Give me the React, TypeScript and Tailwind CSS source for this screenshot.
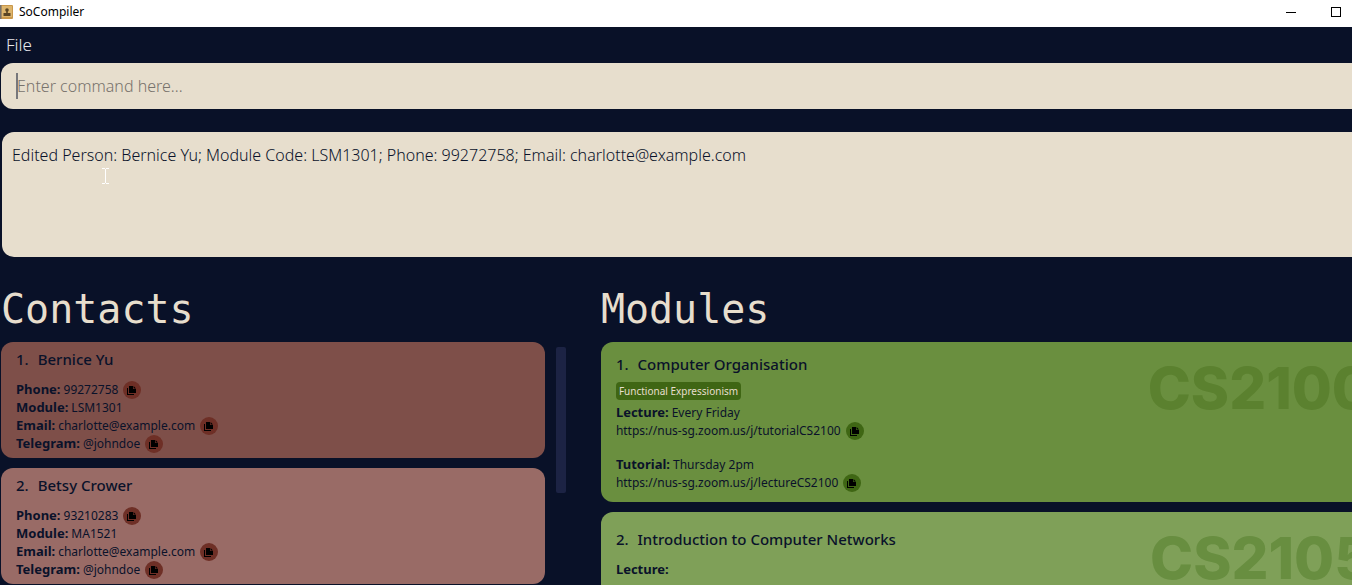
import React from "react";

type Contact = {
  name: string;
  phone: string;
  module: string;
  email: string;
  telegram: string;
  card: string;
};

type Lesson = { label: string; time?: string; url?: string };

type Module = {
  title: string;
  code: string;
  tag?: string;
  lessons: Lesson[];
  card: string;
  mark: string;
};

const contacts: Contact[] = [
  {
    name: "Bernice Yu",
    phone: "99272758",
    module: "LSM1301",
    email: "charlotte@example.com",
    telegram: "@johndoe",
    card: "bg-[#7e4f49]",
  },
  {
    name: "Betsy Crower",
    phone: "93210283",
    module: "MA1521",
    email: "charlotte@example.com",
    telegram: "@johndoe",
    card: "bg-[#996b66]",
  },
];

const modules: Module[] = [
  {
    title: "Computer Organisation",
    code: "CS2100",
    tag: "Functional Expressionism",
    lessons: [
      { label: "Lecture:", time: "Every Friday", url: "https://nus-sg.zoom.us/j/tutorialCS2100" },
      { label: "Tutorial:", time: "Thursday 2pm", url: "https://nus-sg.zoom.us/j/lectureCS2100" },
    ],
    card: "bg-[#6a8f3f] pt-2.5",
    mark: "text-[#5b812f]",
  },
  {
    title: "Introduction to Computer Networks",
    code: "CS2105",
    lessons: [{ label: "Lecture:" }],
    card: "bg-[#7fa058] pt-[15px]",
    mark: "text-[#688e40]",
  },
];

function CopyButton({ label, color }: { label: string; color: string }) {
  return (
    <button
      type="button"
      aria-label={label}
      className={`flex size-[18px] shrink-0 items-center justify-center rounded-full ${color}`}
    >
      <svg viewBox="0 0 10 10" className="size-2.5" aria-hidden="true">
        <path d="M2 1H6V4H9V8H2Z" fill="#000" />
        <path d="M6.6 1L9 3.4H6.6Z" fill="#000" />
        <path d="M0 3H1V9H7V10H0Z" fill="#000" />
      </svg>
    </button>
  );
}

function Field({ label, value, copy }: { label: string; value: string; copy?: boolean }) {
  return (
    <div className="flex h-[18px] items-center gap-[3px]">
      <dt className="text-[13px] font-bold">{label}</dt>
      <dd className="flex items-center gap-[5px]">
        {value}
        {copy && <CopyButton label={`Copy ${value}`} color="bg-[#6e2f26]" />}
      </dd>
    </div>
  );
}

function ContactCard({ contact, index }: { contact: Contact; index: number }) {
  return (
    <li className={`rounded-xl px-[15px] pt-[5px] pb-[5px] ${contact.card}`}>
      <h2 className="flex h-6 items-center gap-[9px] text-[15px] font-medium">
        <span>{index}.</span>
        {contact.name}
      </h2>
      <dl className="mt-2.5 text-[12px]">
        <Field label="Phone:" value={contact.phone} copy />
        <Field label="Module:" value={contact.module} />
        <Field label="Email:" value={contact.email} copy />
        <Field label="Telegram:" value={contact.telegram} copy />
      </dl>
    </li>
  );
}

function ModuleCard({ module, index }: { module: Module; index: number }) {
  return (
    <li className={`relative min-h-[160px] overflow-hidden rounded-l-xl px-[15px] ${module.card}`}>
      <h2 className="flex h-6 items-center gap-[9px] text-[15px] font-medium">
        <span>{index}.</span>
        {module.title}
      </h2>
      {module.tag && (
        <span className="mt-1.5 mb-[-6px] flex h-[18px] w-fit items-center rounded-sm bg-[#3f6614] px-[3px] text-[10px] text-[#e7decd]">
          {module.tag}
        </span>
      )}
      <div className="mt-2.5 flex flex-col gap-4 text-[12px]">
        {module.lessons.map((lesson) => (
          <div key={lesson.label}>
            <p className="flex h-[18px] items-center gap-[3px]">
              <b className="text-[13px]">{lesson.label}</b>
              {lesson.time}
            </p>
            {lesson.url && (
              <p className="flex h-[18px] items-center gap-[5px]">
                <a href={lesson.url}>{lesson.url}</a>
                <CopyButton label={`Copy ${lesson.label} link`} color="bg-[#3f6614]" />
              </p>
            )}
          </div>
        ))}
      </div>
      <span
        className={`absolute top-[14px] -right-5 font-['Inter'] text-[58px] leading-[64px] font-extrabold ${module.mark}`}
      >
        {module.code}
      </span>
    </li>
  );
}

export default function App() {
  return (
    <div className="flex h-screen flex-col overflow-hidden bg-[#091128] font-['Noto_Sans',sans-serif] text-[#0a122a]">
      <header className="flex h-[27px] shrink-0 items-center bg-white pb-[3px] text-xs text-black">
        <svg viewBox="0 0 13 14" className="h-[14px] w-[13px]" aria-hidden="true">
          <rect width="13" height="14" rx="1" fill="#c9974a" />
          <rect x="1.5" y="1" width="10.5" height="11" fill="#ddb56c" />
          <rect width="1.5" height="14" fill="#77716c" />
          <circle cx="7" cy="5" r="1.8" fill="#5a4524" />
          <path d="M6.2 6H7.8V8H10.5V11H3.5V8H6.2Z" fill="#5a4524" />
        </svg>
        <span className="ml-1.5 grow">SoCompiler</span>
        <button type="button" aria-label="Minimize" className="mr-[35px]">
          <svg viewBox="0 0 10 10" className="size-2.5" aria-hidden="true">
            <path d="M0 5.5H10" stroke="#000" />
          </svg>
        </button>
        <button type="button" aria-label="Maximize" className="mr-[11px]">
          <svg viewBox="0 0 10 10" className="size-2.5" aria-hidden="true">
            <rect x="0.5" y="0.5" width="9" height="9" fill="none" stroke="#000" />
          </svg>
        </button>
      </header>

      <nav className="flex h-9 shrink-0 items-center px-1.5">
        <button type="button" className="text-[17px] font-light text-[#e8e8ec]">
          File
        </button>
      </nav>

      <div className="relative ml-px shrink-0">
        <input
          type="text"
          aria-label="Command"
          placeholder="Enter command here..."
          className="block h-[46px] w-full rounded-l-xl bg-[#e7decd] pl-4 text-base font-light caret-transparent outline-none placeholder:text-[#77726c]"
        />
        <span className="absolute top-2.5 left-[15px] h-[26px] w-0.5 bg-[#77777b]" />
      </div>

      <div className="relative mt-[23px] ml-0.5 h-[125px] shrink-0 rounded-l-xl bg-[#e7decd] px-2.5 pt-[11px] text-base leading-6 font-light">
        <p>Edited Person: Bernice Yu; Module Code: LSM1301; Phone: 99272758; Email: charlotte@example.com</p>
        <svg viewBox="0 0 7 16" className="absolute top-9 left-[100px] h-4 w-[7px]" aria-hidden="true">
          <path d="M0 0.5H3M4 0.5H7M3.5 1V15M0 15.5H3M4 15.5H7" stroke="#fff" fill="none" />
        </svg>
      </div>

      <main className="mt-[27px] grid grow grid-cols-[4fr_5fr]">
        <section className="pl-px">
          <h1 className="h-[58px] font-['DejaVu_Sans_Mono',monospace] text-[40px] leading-[50px] text-[#e7decd]">
            Contacts
          </h1>
          <div className="flex gap-[11px] pr-[35px]">
            <ul className="flex grow flex-col gap-2.5">
              {contacts.map((contact, i) => (
                <ContactCard key={contact.name} contact={contact} index={i + 1} />
              ))}
            </ul>
            <div className="mt-[5px] h-[146px] w-2.5 shrink-0 rounded-xs bg-[#1c2344]" />
          </div>
        </section>
        <section className="min-w-0">
          <h1 className="h-[58px] font-['DejaVu_Sans_Mono',monospace] text-[40px] leading-[50px] text-[#e7decd]">
            Modules
          </h1>
          <ul className="flex flex-col gap-2.5">
            {modules.map((module, i) => (
              <ModuleCard key={module.code} module={module} index={i + 1} />
            ))}
          </ul>
        </section>
      </main>
    </div>
  );
}
